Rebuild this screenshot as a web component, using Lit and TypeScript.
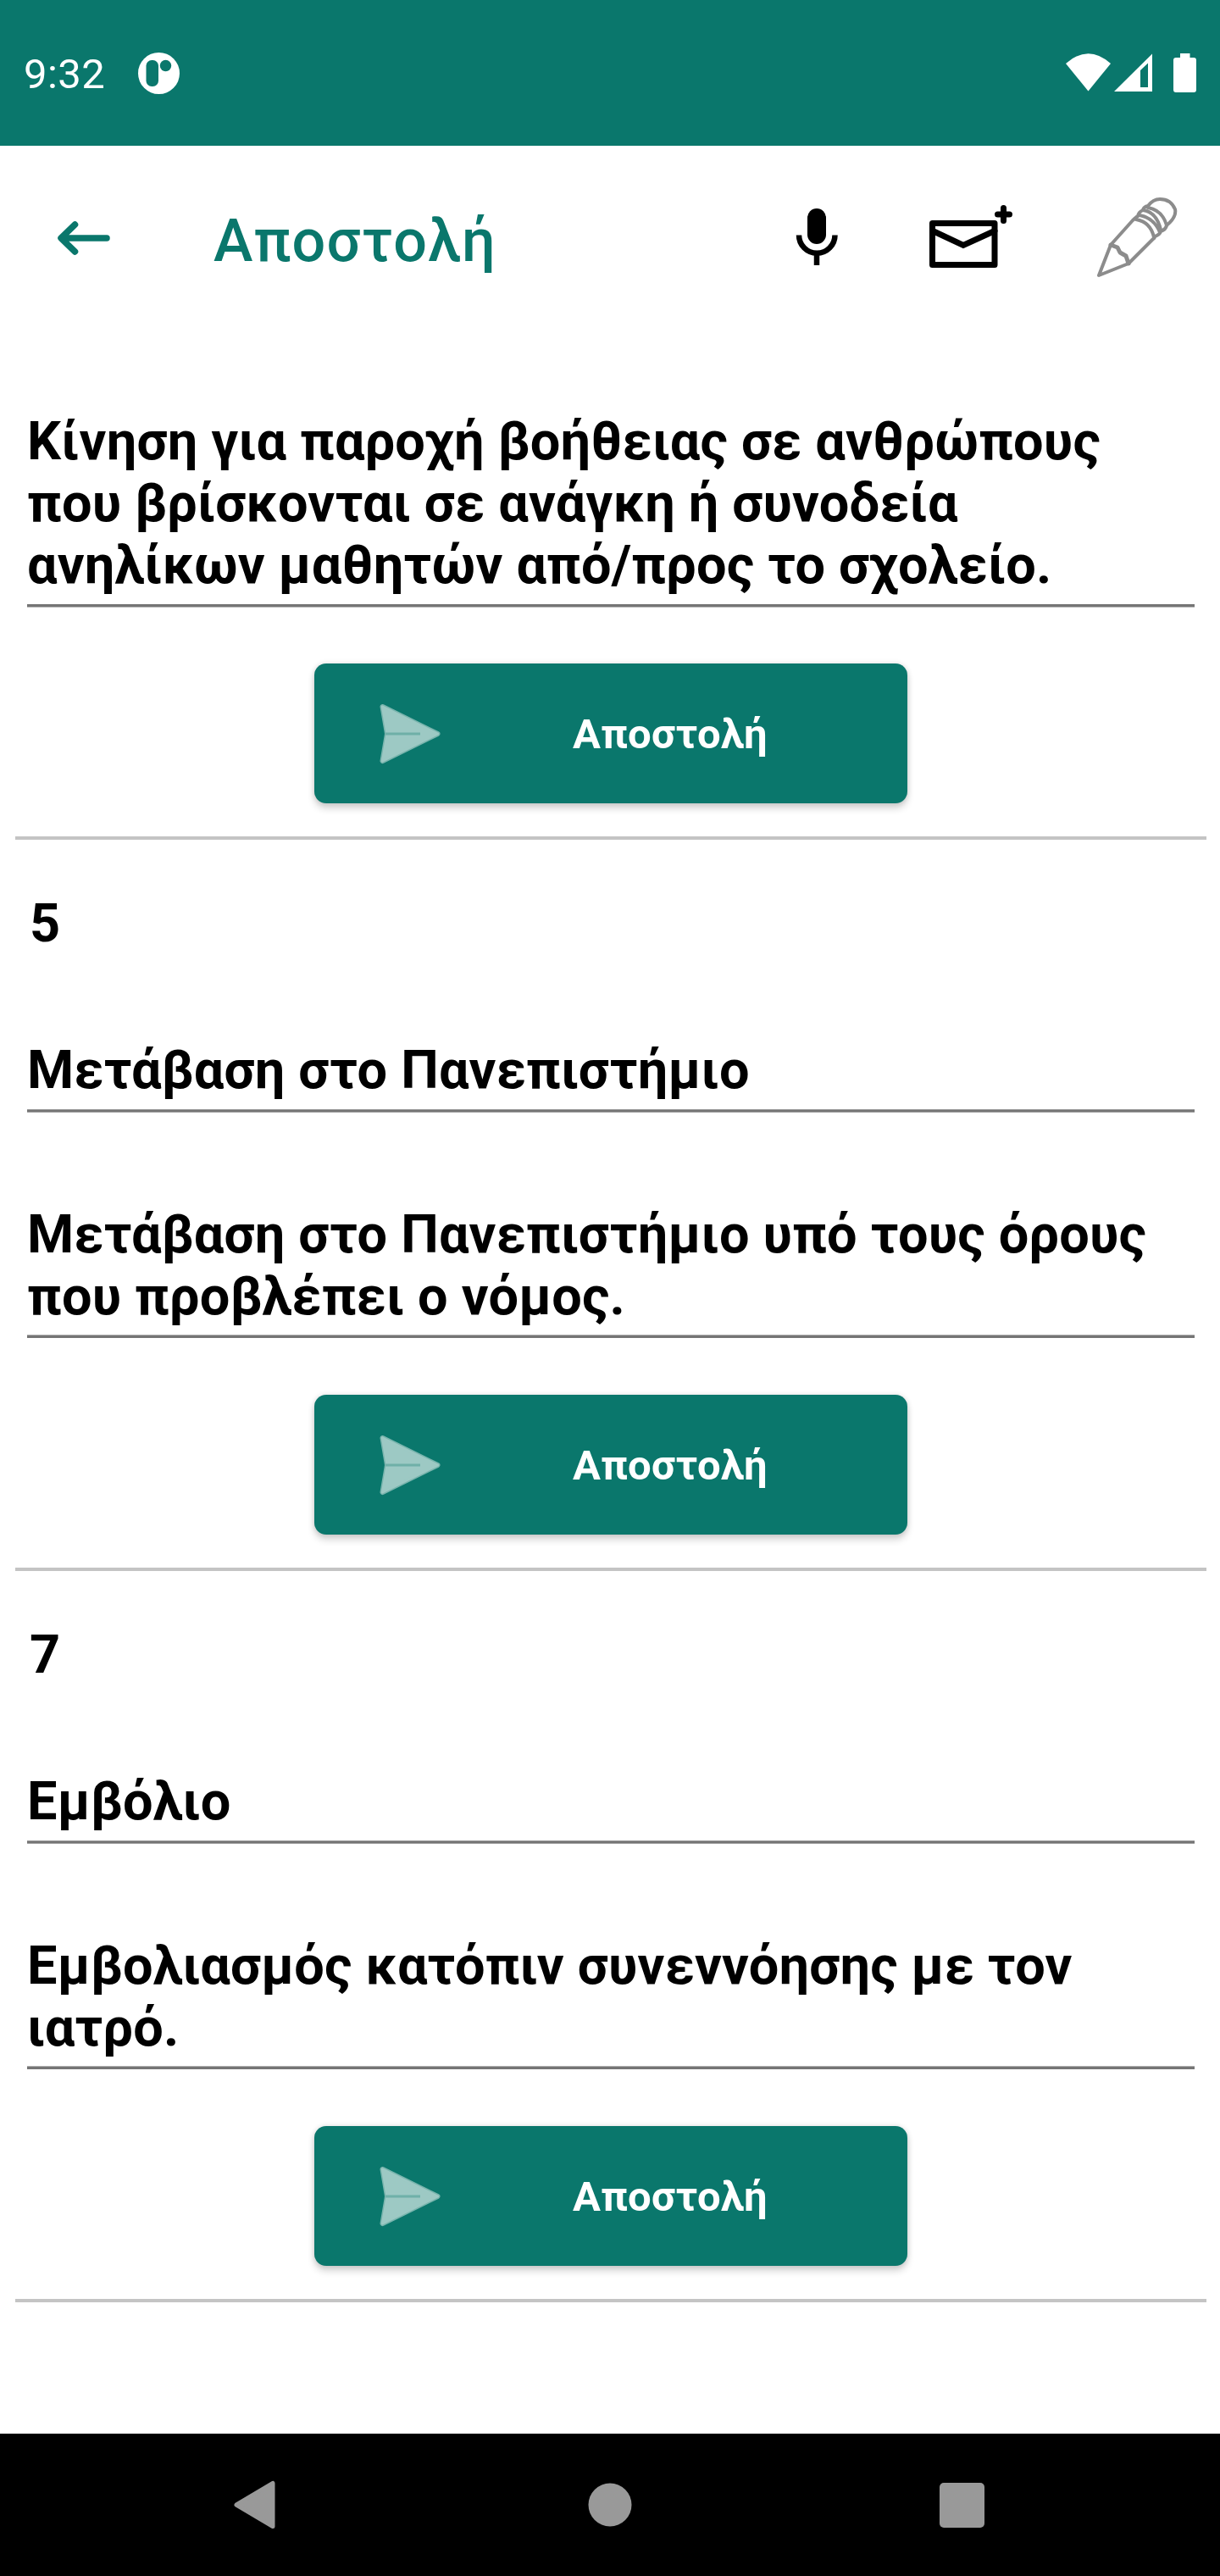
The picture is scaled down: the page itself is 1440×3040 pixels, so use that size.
import { LitElement, html, css, nothing } from "lit";
import { customElement } from "lit/decorators.js";

interface Entry {
  code?: string;
  title?: string;
  body: string[];
}

const ENTRIES: Entry[] = [
  {
    body: [
      "Κίνηση για παροχή βοήθειας σε ανθρώπους",
      "που βρίσκονται σε ανάγκη ή συνοδεία",
      "ανηλίκων μαθητών από/προς το σχολείο.",
    ],
  },
  {
    code: "5",
    title: "Μετάβαση στο Πανεπιστήμιο",
    body: ["Μετάβαση στο Πανεπιστήμιο υπό τους όρους", "που προβλέπει ο νόμος."],
  },
  {
    code: "7",
    title: "Εμβόλιο",
    body: ["Εμβολιασμός κατόπιν συνεννόησης με τον", "ιατρό."],
  },
];

@customElement("app-root")
export class AppRoot extends LitElement {
  static styles = css`
    :host {
      display: flex;
      flex-direction: column;
      width: 1440px;
      height: 3040px;
      overflow: hidden;
      background: #fff;
      color: #000;
      font-family: Roboto, "Noto Sans", sans-serif;
    }
    * { box-sizing: border-box; }
    svg { display: block; flex: none; }
    .status {
      flex: none;
      display: flex;
      align-items: center;
      height: 172px;
      padding: 0 28px;
      background: #0a776c;
      color: #fff;
    }
    .clock {
      font-size: 49px;
      line-height: 58px;
      padding-top: 3px;
      width: 135px;
      letter-spacing: 0.4px;
    }
    .spacer { flex: 1; }
    .toolbar {
      flex: none;
      display: flex;
      align-items: center;
      height: 224px;
      color: #0a776c;
    }
    .back { margin: 0 0 6px 66px; }
    .title {
      flex: 1;
      margin: 0 0 0 120px;
      font-size: 70px;
      line-height: 82px;
      font-weight: 500;
      letter-spacing: 1.25px;
    }
    .list { flex: 1; display: flex; flex-direction: column; }
    .entry {
      flex: none;
      display: flex;
      flex-direction: column;
      height: 863px;
      margin: 0 16px 0 18px;
      padding: 0 14px;
      border-bottom: 4px solid #c4c4c4;
    }
    .entry.first { height: 595px; padding-top: 88px; }
    .code { padding: 62px 0 0 3px; font-size: 63px; font-weight: 700; line-height: 74px; }
    .field {
      font-size: 63px;
      font-weight: 700;
      line-height: 73px;
      letter-spacing: 0.2px;
      white-space: nowrap;
      padding-bottom: 13px;
      background: linear-gradient(#b0b0b0 0 1px, #757575 1px 4px) bottom / 100% 4px no-repeat;
    }
    .first .field {
      padding-bottom: 14px;
      background-image: linear-gradient(#757575 0 3px, #b8b8b8 3px 4px);
    }
    .field.head {
      margin-top: 99px;
      padding-bottom: 14px;
      background-image: linear-gradient(#959595 0 1px, #757575 1px 3px, #a0a0a0 3px 4px);
    }
    .head + .field { margin-top: 107px; }
    .send {
      align-self: center;
      display: flex;
      align-items: center;
      width: 700px;
      height: 165px;
      margin-top: 67px;
      padding: 0 0 0 74px;
      border: 0;
      border-radius: 14px;
      background: #0a776c;
      color: #fff;
      font: 700 49px/58px Roboto, "Noto Sans", sans-serif;
      letter-spacing: 0.25px;
      box-shadow: 0 6px 9px rgba(0, 0, 0, 0.17), 0 0 6px rgba(0, 0, 0, 0.13);
    }
    .first .send { margin-top: 66px; }
    .send span { margin-left: 155px; padding-top: 2px; }
    .nav {
      flex: none;
      display: flex;
      align-items: center;
      justify-content: space-between;
      height: 168px;
      padding: 0 278px 0 274px;
      background: #000;
    }
    .home { margin-left: 5px; }
  `;

  private field(lines: string[], cls = "") {
    return html`<div class="field ${cls}">${lines.map((l) => html`<div>${l}</div>`)}</div>`;
  }

  private entry(e: Entry) {
    return html`<section class="entry ${e.code ? "" : "first"}">
      ${e.code ? html`<div class="code">${e.code}</div>` : nothing}
      ${e.title ? this.field([e.title], "head") : nothing}
      ${this.field(e.body)}
      <button class="send">
        <svg width="76" height="76" viewBox="0 0 76 76">
          <path d="M6.500 6L71.500 38L6.500 70L12 38Z" fill="#7ab5ae" stroke="#7ab5ae" stroke-width="6" stroke-linejoin="round" />
          <path d="M6.500 6L71.500 38L6.500 70L12 38Z" fill="#9dc9c4" stroke="#9dc9c4" stroke-width="3" stroke-linejoin="round" />
          <path d="M10 38H51" stroke="#6fb0a8" stroke-width="3" />
        </svg>
        <span>Αποστολή</span>
      </button>
    </section>`;
  }

  render() {
    return html`
      <header class="status">
        <div class="clock">9:32</div>
        <svg width="49" height="49" viewBox="0 0 49 49">
          <circle cx="24.5" cy="24.5" r="24.5" fill="#fff" />
          <rect x="9.5" y="9" width="14.5" height="31" rx="6.5" fill="#0a776c" />
          <circle cx="32.5" cy="15.5" r="6.7" fill="#0a776c" />
        </svg>
        <div class="spacer"></div>
        <svg width="156" height="48" viewBox="1256 62 156 48">
          <path d="M1258 75Q1284.500 51.500 1311 75L1284.500 107.500Z" fill="#fff" />
          <path fill-rule="evenodd" d="M1315 108L1360 63.500V108ZM1346 83V103H1355V74.500Z" fill="#fff" />
          <path d="M1393 63H1404.500V68H1409Q1412 68 1412 71V106Q1412 109 1409 109H1388Q1385 109 1385 106V71Q1385 68 1388 68H1393Z" fill="#fff" />
        </svg>
      </header>
      <div class="toolbar">
        <svg class="back" width="66" height="48" viewBox="66 257 66 48" fill="none" stroke="#0a776c" stroke-width="7.500" stroke-linecap="round" stroke-linejoin="round">
          <path d="M126 281H73M88.500 265L72 281L88.500 297" />
        </svg>
        <h1 class="title">Αποστολή</h1>
        <svg width="504" height="150" viewBox="936 209 504 150">
          <rect x="953" y="246" width="22" height="42" rx="11" fill="#000" />
          <path d="M943 277.500A21 21 0 0 0 985.500 277.500M964 298V313" fill="none" stroke="#000" stroke-width="6.500" />
          <path d="M1100.500 263.500H1174V312.500H1100.500Z" fill="none" stroke="#000" stroke-width="7" stroke-linejoin="round" />
          <path d="M1101 272.500L1137 289.500L1174 272.500M1184.500 245.500V260.500M1177.500 253H1191.500" fill="none" stroke="#000" stroke-width="7" stroke-linecap="round" />
          <g fill="none" stroke="#8c8c8c" stroke-width="4" stroke-linejoin="round" stroke-linecap="round">
            <path d="M1311 289L1297 325L1332 311L1361 282Q1363 281 1363 279Q1369 277 1370 273Q1376 271 1377 266Q1389 256 1387 247Q1382 235 1369 235Q1361 235 1355 243Q1350 244 1349 248Q1344 250 1343 255Q1340 257 1337 260Z" />
            <path d="M1341 259Q1358 262 1362 280M1345 254Q1362 257 1369 274M1349 248Q1365 250 1370 271M1355 245Q1372 248 1377 266" />
            <path d="M1311 289L1319 292L1322 298L1329 302L1332 311" stroke-width="5" />
          </g>
        </svg>
      </div>
      <main class="list">${ENTRIES.map((e) => this.entry(e))}</main>
      <footer class="nav">
        <svg width="52" height="58" viewBox="0 0 52 58"><path d="M48 3.500V54.500L5 29Z" fill="#999" stroke="#999" stroke-width="5" stroke-linejoin="round" /></svg>
        <svg class="home" width="52" height="52" viewBox="0 0 52 52"><circle cx="26" cy="26" r="25.500" fill="#999" /></svg>
        <svg width="53" height="53" viewBox="0 0 53 53"><rect width="53" height="53" rx="5" fill="#999" /></svg>
      </footer>
    `;
  }
}
